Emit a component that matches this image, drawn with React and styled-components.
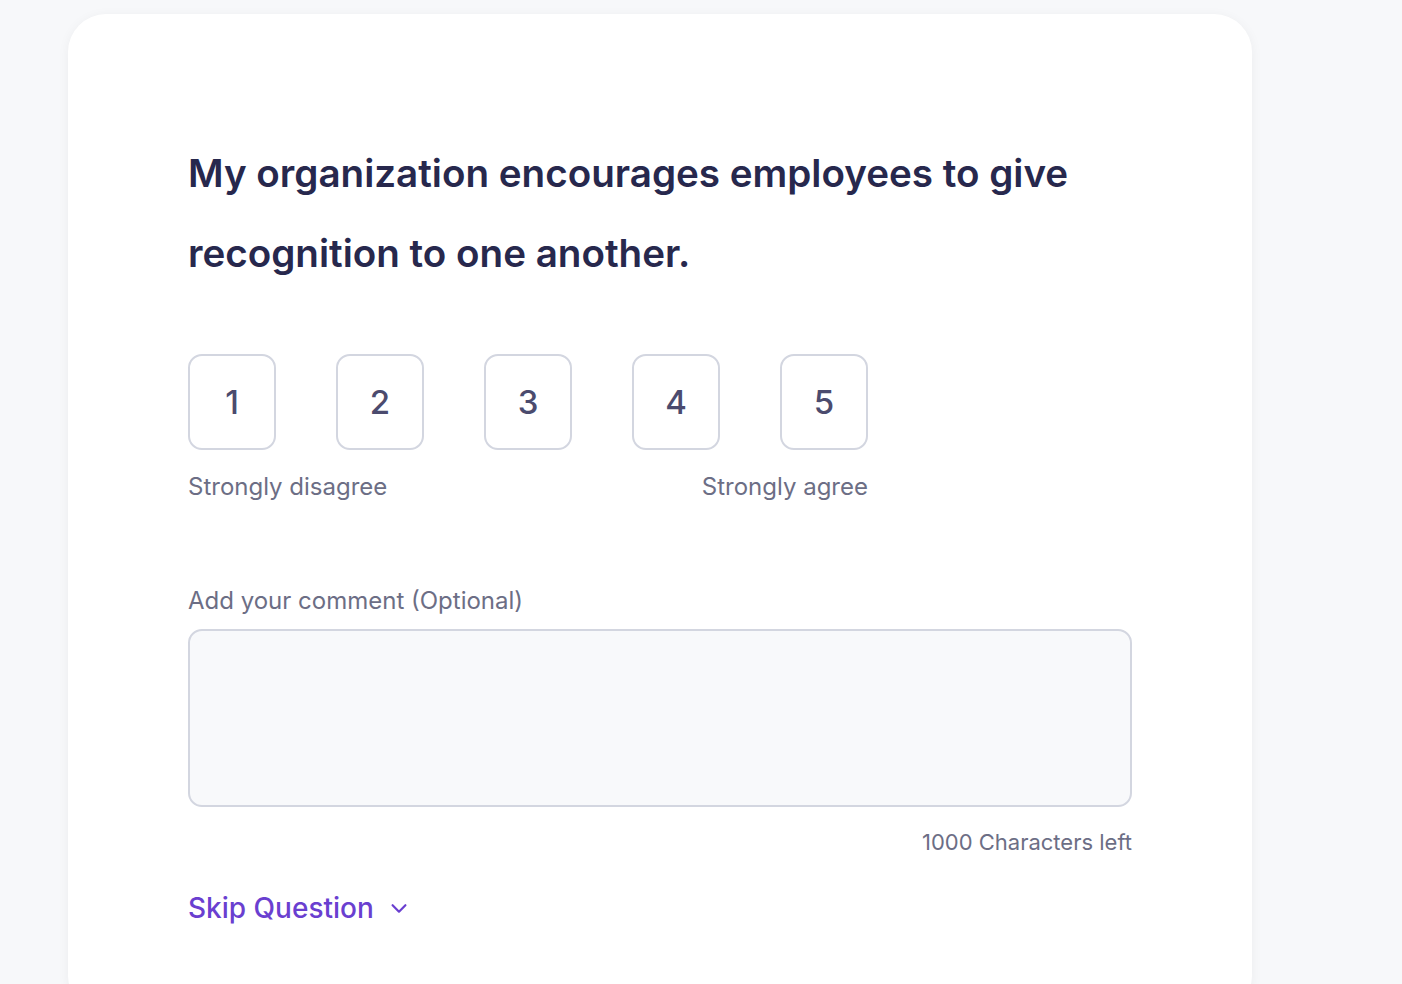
import { useState } from "react"
import styled, { createGlobalStyle } from "styled-components"

const Global = createGlobalStyle`
    html, body {
        margin: 0;
        background-color: #F7F8FA;
        font-family: Inter, "Noto Sans", sans-serif;
    }
`

export default function App() {
    const [score, setScore] = useState(null)
    const [comment, setComment] = useState("")

    return (
        <>
            <Global />
            <Page>
                <Card>
                    <Question>My organization encourages employees to give recognition to one another.</Question>
                    <Scale>
                        <Options>
                            {[1, 2, 3, 4, 5].map((n) => (
                                <Option key={n} $active={score === n} onClick={() => setScore(n)}>{n}</Option>
                            ))}
                        </Options>
                        <Legend>
                            <span>Strongly disagree</span>
                            <span>Strongly agree</span>
                        </Legend>
                    </Scale>
                    <Comment>
                        <Label>Add your comment (Optional)</Label>
                        <TextArea value={comment} maxLength={1000} onChange={(e) => setComment(e.target.value)} />
                        <Counter>{1000 - comment.length} Characters left</Counter>
                    </Comment>
                    <Skip>
                        Skip Question
                        <svg width="22" height="22" viewBox="0 0 24 24" fill="none" stroke="currentColor" strokeWidth="2.4" strokeLinecap="round" strokeLinejoin="round">
                            <path d="M5 9l7 7 7-7" />
                        </svg>
                    </Skip>
                </Card>
            </Page>
        </>
    )
}

const Page = styled.div`
    min-height: 100vh;
    padding: 14px 0 0 68px;
    box-sizing: border-box;
`

const Card = styled.div`
    width: 1184px;
    min-height: 1000px;
    box-sizing: border-box;
    background-color: #FFFFFF;
    border-radius: 38px;
    box-shadow: 0 2px 12px rgba(20, 24, 40, 0.05);
    padding: 119px 120px 0 120px;
`

const Question = styled.h1`
    margin: 0;
    width: 920px;
    font-size: 38.6px;
    font-weight: 600;
    line-height: 80px;
    color: #27284D;
`

const Scale = styled.div`
    display: inline-flex;
    flex-direction: column;
    margin-top: 61px;
`

const Options = styled.div`
    display: flex;
    gap: 60px;
`

const Option = styled.button`
    width: 88px;
    height: 96px;
    box-sizing: border-box;
    border: 2px solid ${(p) => (p.$active ? "#6A3FD0" : "#D3D6E0")};
    border-radius: 14px;
    background-color: #FFFFFF;
    font-family: inherit;
    font-size: 33px;
    font-weight: 500;
    color: #4B4B6E;
    cursor: pointer;
`

const Legend = styled.div`
    display: flex;
    justify-content: space-between;
    margin-top: 22px;
    font-size: 24px;
    color: #6C6E85;
`

const Comment = styled.div`
    display: flex;
    flex-direction: column;
    margin-top: 85px;
`

const Label = styled.div`
    font-size: 24px;
    color: #6C6E85;
`

const TextArea = styled.textarea`
    margin-top: 14px;
    width: 944px;
    height: 178px;
    box-sizing: border-box;
    border: 2px solid #D3D6E0;
    border-radius: 14px;
    background-color: #F8F9FB;
    resize: none;
    outline: none;
    padding: 16px;
    font-family: inherit;
    font-size: 22px;
`

const Counter = styled.div`
    width: 944px;
    text-align: right;
    margin-top: 22px;
    font-size: 22px;
    color: #6C6E85;
`

const Skip = styled.button`
    display: flex;
    align-items: center;
    gap: 14px;
    margin-top: 36px;
    padding: 0;
    border: none;
    background: none;
    font-family: inherit;
    font-size: 28px;
    font-weight: 500;
    color: #6A3FD0;
    cursor: pointer;
`
